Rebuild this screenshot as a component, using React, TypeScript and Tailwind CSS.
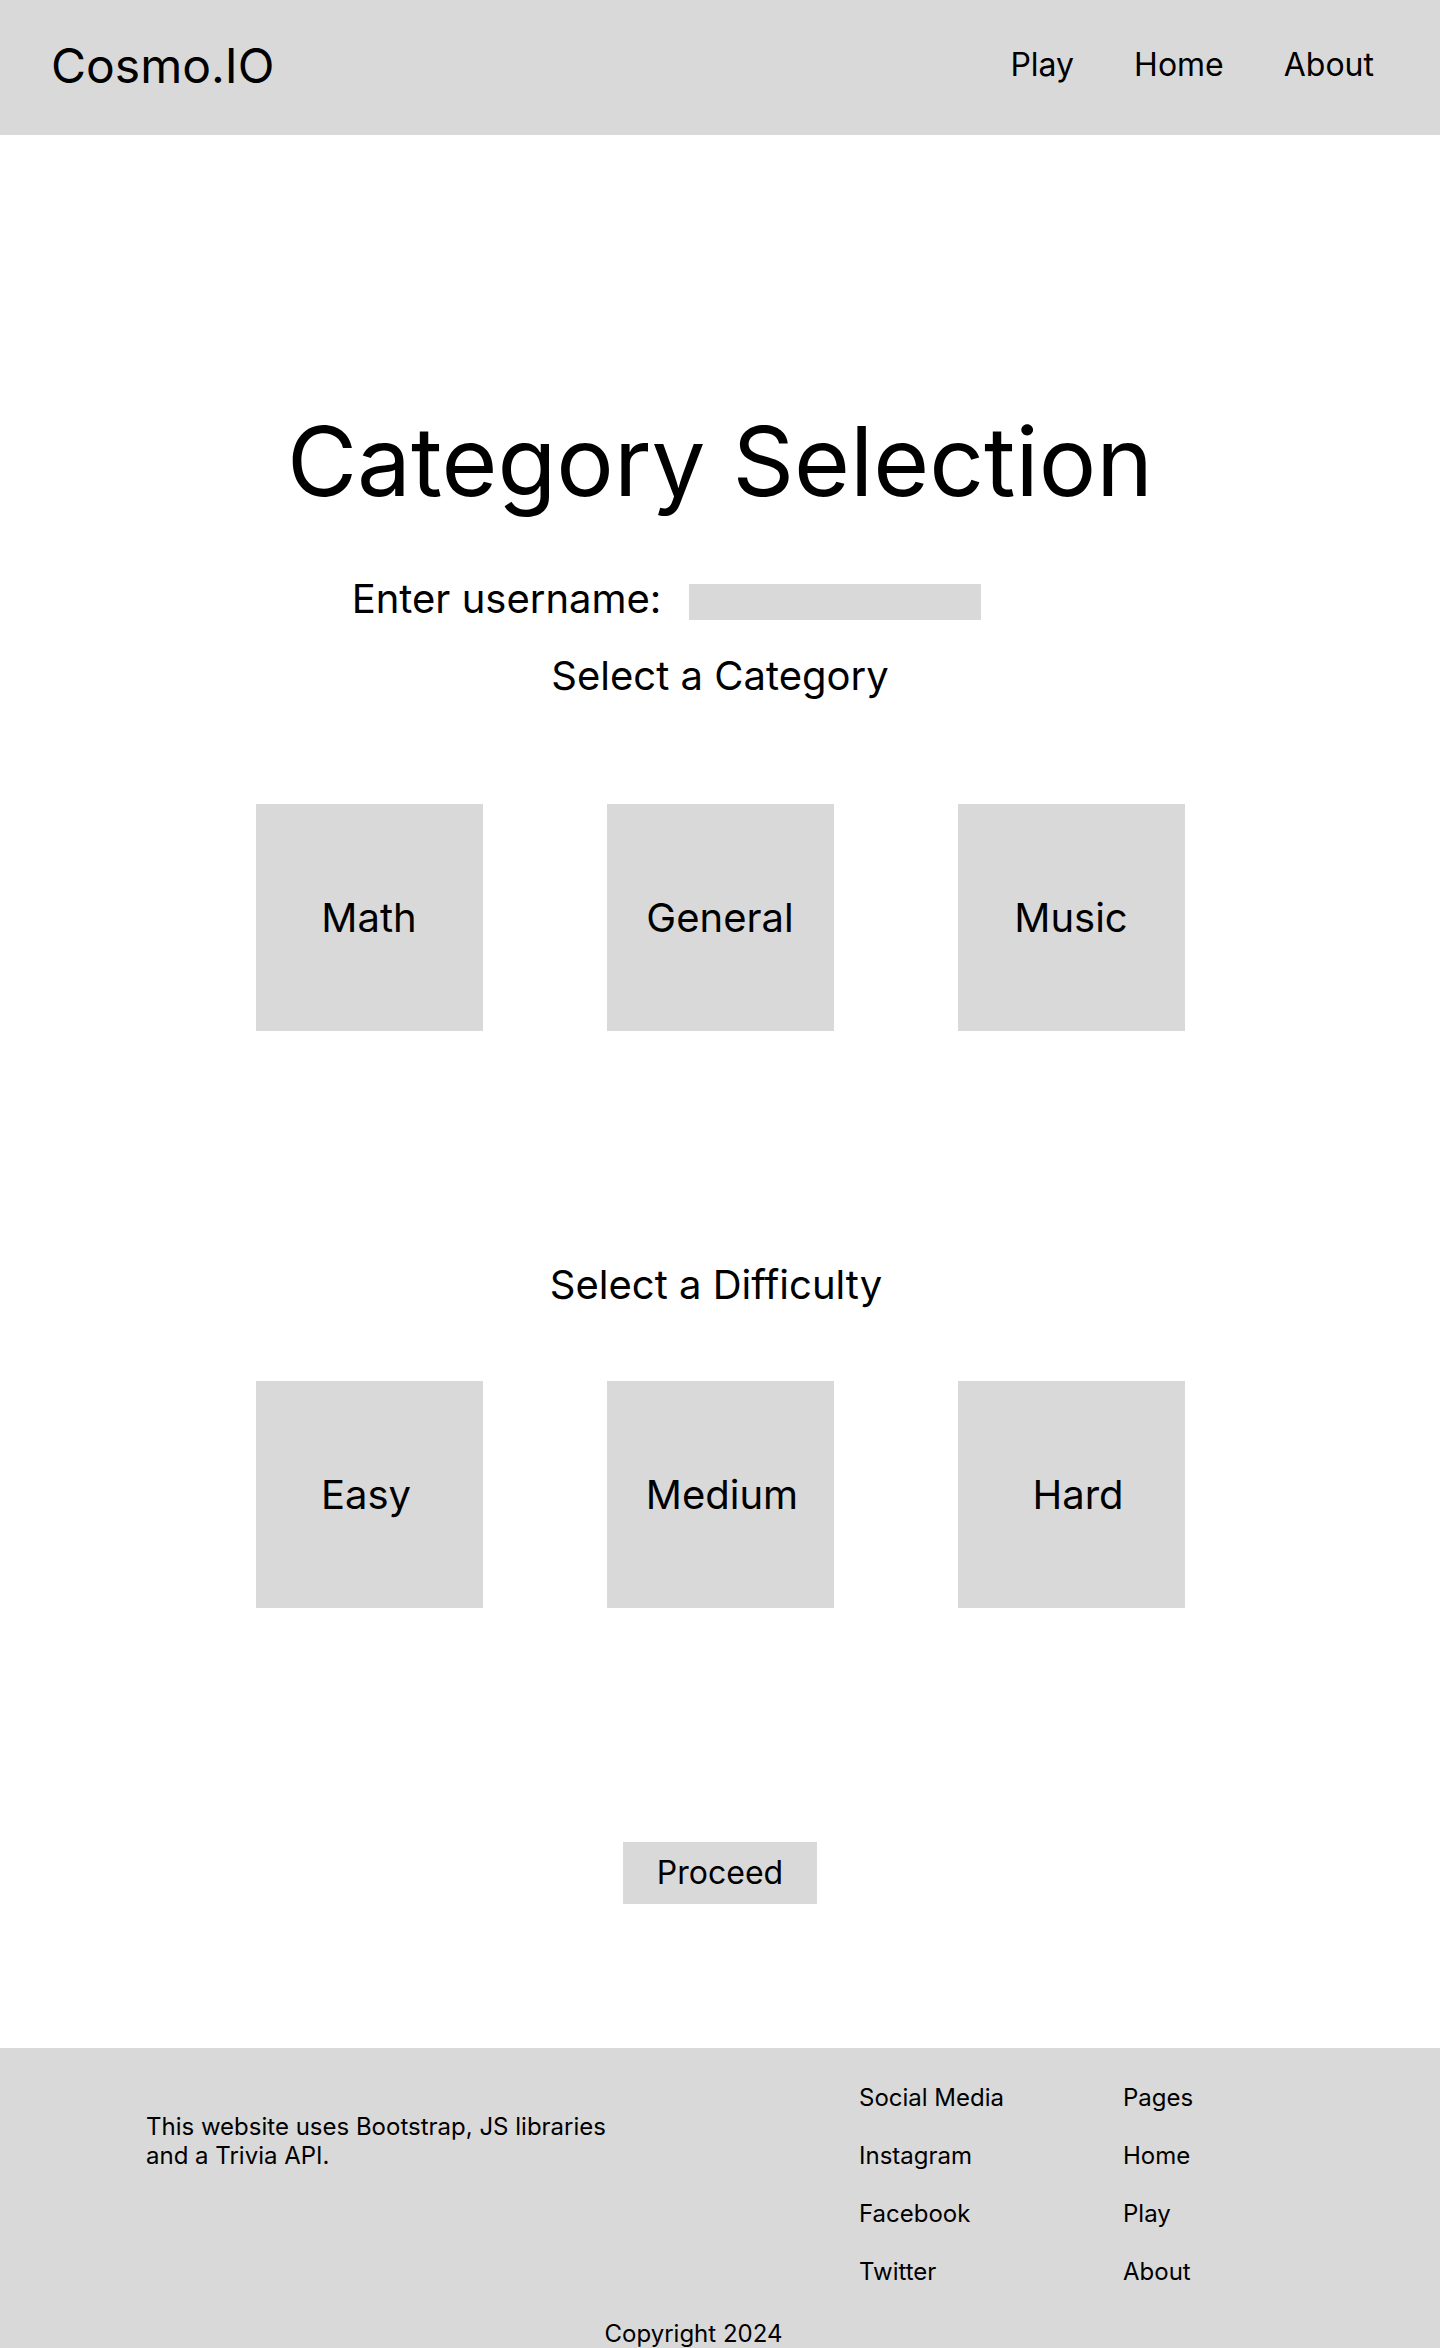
import { useState } from 'react'

const categories = ['Math', 'General', 'Music']

// small nudges so labels sit where they do in the mock
const difficulties: [string, string][] = [
  ['Easy', 'pr-[6px]'],
  ['Medium', 'pl-[4px]'],
  ['Hard', 'pl-[14px]'],
]

export default function App() {
  const [username, setUsername] = useState('')
  const [category, setCategory] = useState<string | null>(null)
  const [difficulty, setDifficulty] = useState<string | null>(null)

  return (
    <div className="flex min-h-screen flex-col bg-white text-black font-['Inter','Noto_Sans',sans-serif]">

      {/* Header */}
      <header className="flex h-[135px] items-center justify-between bg-[#d9d9d9] pb-[3px] pl-[51px] pr-[66px]">
        <div className="text-[48px] leading-none">Cosmo.IO</div>
        <nav className="flex items-center gap-[60px] pb-[3px] text-[32px] leading-none">
          <a href="#">Play</a>
          <a href="#">Home</a>
          <a href="#">About</a>
        </nav>
      </header>

      {/* Main */}
      <main className="flex flex-col items-center pt-[278px] pb-[144px]">
        <h1 className="text-[96px] leading-none">Category Selection</h1>

        <div className="mt-[70px] flex items-start gap-[28px] self-stretch justify-center pr-[107px]">
          <label htmlFor="username" className="text-[40px] leading-none">Enter username:</label>
          <input
            id="username"
            value={username}
            onChange={e => setUsername(e.target.value)}
            className="mt-[5px] h-[36px] w-[292px] bg-[#d9d9d9] px-2 text-[20px] outline-none"
          />
        </div>

        <h2 className="mt-[36px] text-[40px] leading-none">Select a Category</h2>

        <div className="mt-[108px] flex justify-center gap-[124px]">
          {categories.map(c => (
            <button
              key={c}
              onClick={() => setCategory(c)}
              className="flex h-[227px] w-[227px] items-center justify-center bg-[#d9d9d9] text-[40px] leading-none"
            >
              {c}
            </button>
          ))}
        </div>

        <h2 className="mt-[234px] pr-[8px] text-[40px] leading-none">Select a Difficulty</h2>

        <div className="mt-[76px] flex justify-center gap-[124px]">
          {difficulties.map(([d, nudge]) => (
            <button
              key={d}
              onClick={() => setDifficulty(d)}
              className={`flex h-[227px] w-[227px] items-center justify-center bg-[#d9d9d9] text-[40px] leading-none ${nudge}`}
            >
              {d}
            </button>
          ))}
        </div>

        <button
          className="mt-[234px] flex h-[62px] w-[194px] items-center justify-center bg-[#d9d9d9] text-[32px] leading-none"
          disabled={!category || !difficulty}
        >
          Proceed
        </button>
      </main>

      {/* Footer */}
      <footer className="flex h-[300px] flex-col bg-[#d9d9d9] pt-[35px] text-[24px] leading-[29px]">
        <div className="flex">
          <p className="ml-[146px] mt-[29px] w-[713px]">
            This website uses Bootstrap, JS libraries
            <br />
            and a Trivia API.
          </p>
          <div className="flex w-[264px] flex-col gap-[29px]">
            <span>Social Media</span>
            <a href="#">Instagram</a>
            <a href="#">Facebook</a>
            <a href="#">Twitter</a>
          </div>
          <div className="flex flex-col gap-[29px]">
            <span>Pages</span>
            <a href="#">Home</a>
            <a href="#">Play</a>
            <a href="#">About</a>
          </div>
        </div>
        <p className="mt-[33px] pr-[53px] text-center">Copyright 2024</p>
      </footer>
    </div>
  )
}
